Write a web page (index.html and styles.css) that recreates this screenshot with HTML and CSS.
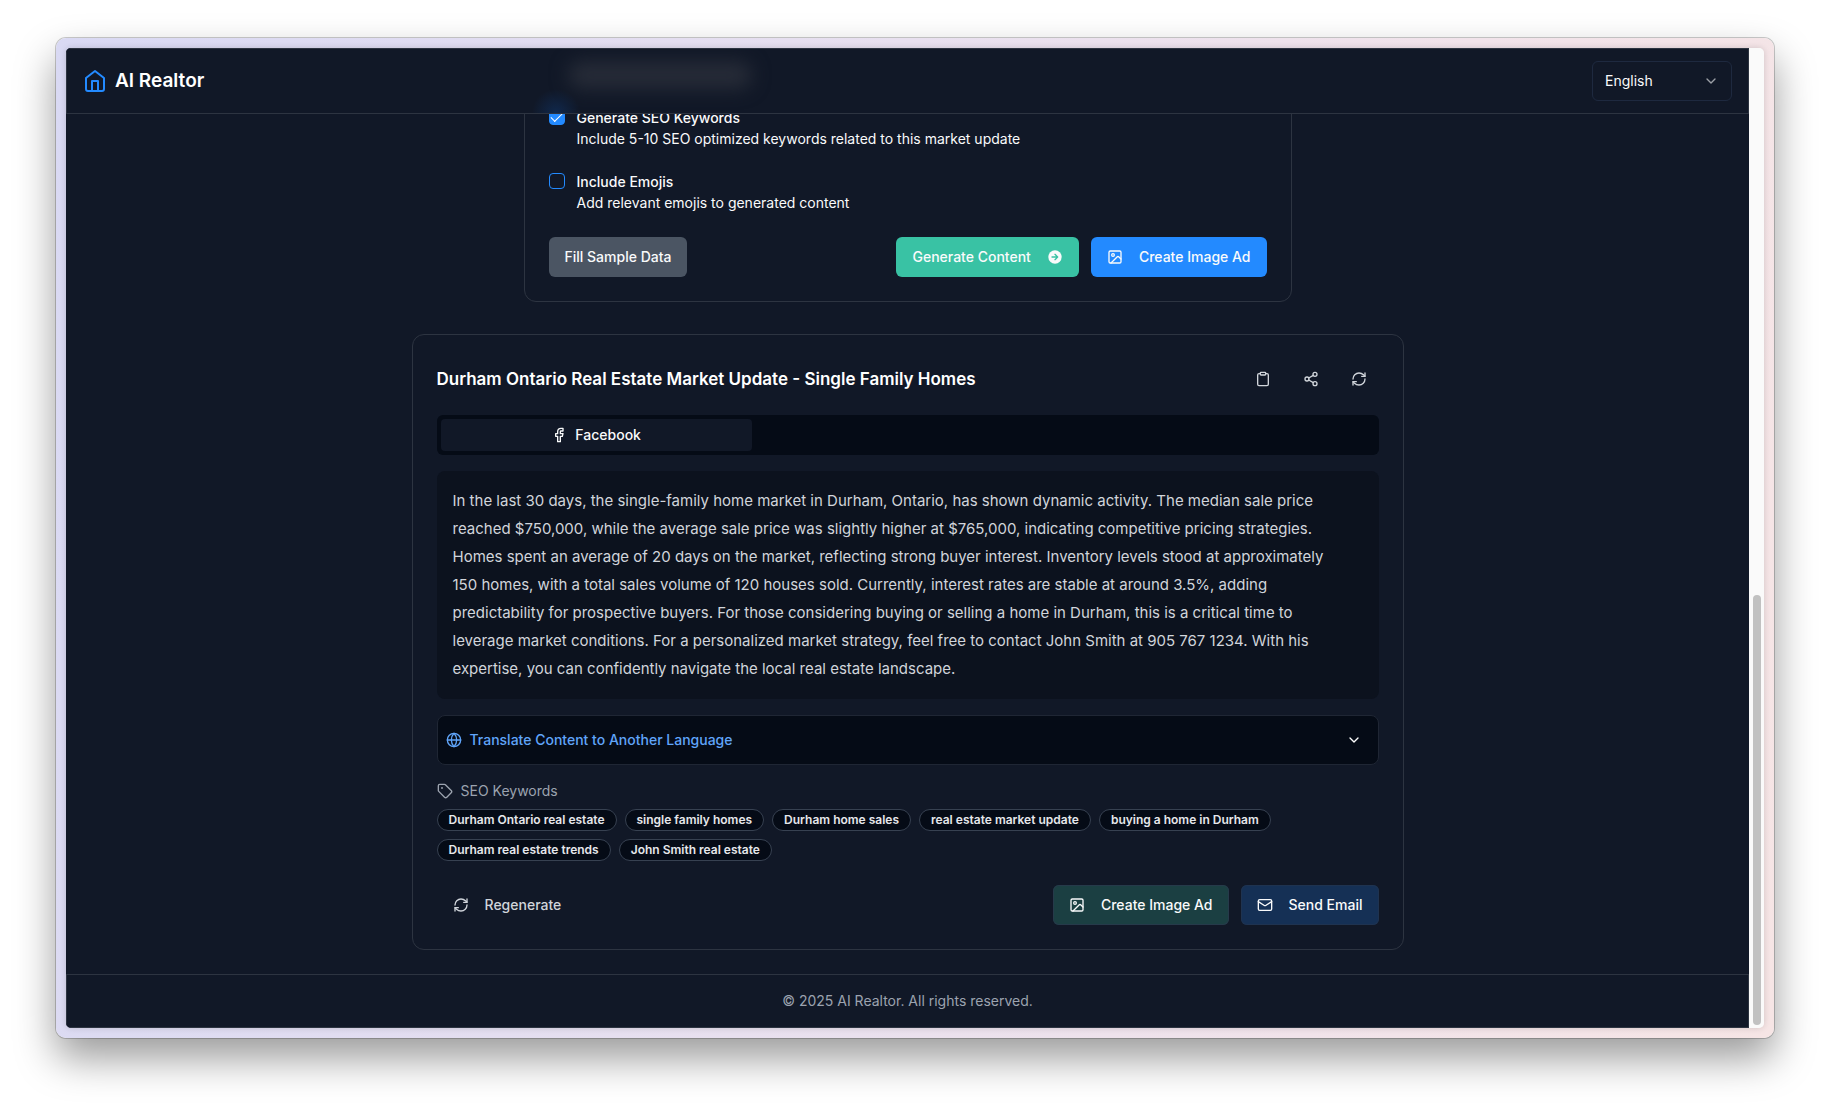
FILE: index.html
```html
<!DOCTYPE html>
<html lang="en">
<head>
<meta charset="utf-8">
<meta name="viewport" content="width=device-width, initial-scale=1">
<title>AI Realtor</title>
<link rel="stylesheet" href="styles.css">
</head>
<body>
<svg class="sprite" aria-hidden="true">
  <symbol id="house" viewBox="0 0 24 24"><path d="m3 9 9-7 9 7v11a2 2 0 0 1-2 2H5a2 2 0 0 1-2-2z"/><path d="M9 22V12h6v10"/></symbol>
  <symbol id="chevron" viewBox="0 0 24 24"><path d="m6 9 6 6 6-6"/></symbol>
  <symbol id="image" viewBox="0 0 24 24"><rect x="3" y="3" width="18" height="18" rx="2"/><circle cx="9" cy="9" r="2"/><path d="m21 15-3.086-3.086a2 2 0 0 0-2.828 0L6 21"/></symbol>
  <symbol id="arrow-circle" viewBox="0 0 24 24"><circle cx="12" cy="12" r="10" fill="currentColor" stroke="none"/><path class="cut" d="M7.500 12h8M12 8l4 4-4 4"/></symbol>
  <symbol id="clipboard" viewBox="0 0 24 24"><rect x="8" y="2" width="8" height="4" rx="1"/><path d="M16 4h2a2 2 0 0 1 2 2v14a2 2 0 0 1-2 2H6a2 2 0 0 1-2-2V6a2 2 0 0 1 2-2h2"/></symbol>
  <symbol id="share" viewBox="0 0 24 24"><circle cx="18" cy="5" r="3"/><circle cx="6" cy="12" r="3"/><circle cx="18" cy="19" r="3"/><path d="m8.590 13.510 6.830 3.980M15.410 6.510l-6.820 3.980"/></symbol>
  <symbol id="refresh" viewBox="0 0 24 24"><path d="M3 12a9 9 0 0 1 9-9 9.750 9.750 0 0 1 6.740 2.740L21 8"/><path d="M21 3v5h-5"/><path d="M21 12a9 9 0 0 1-9 9 9.750 9.750 0 0 1-6.740-2.740L3 16"/><path d="M8 16H3v5"/></symbol>
  <symbol id="facebook" viewBox="0 0 24 24"><path d="M18 2h-3a5 5 0 0 0-5 5v3H7v4h3v8h4v-8h3l1-4h-4V7a1 1 0 0 1 1-1h3z"/></symbol>
  <symbol id="globe" viewBox="0 0 24 24"><circle cx="12" cy="12" r="10"/><path d="M12 2a14.500 14.500 0 0 0 0 20 14.500 14.500 0 0 0 0-20"/><path d="M2 12h20"/></symbol>
  <symbol id="tag" viewBox="0 0 24 24"><path d="M12.586 2.586A2 2 0 0 0 11.172 2H4a2 2 0 0 0-2 2v7.172a2 2 0 0 0 .586 1.414l8.704 8.704a2.426 2.426 0 0 0 3.420 0l6.580-6.580a2.426 2.426 0 0 0 0-3.420z"/><circle cx="7.500" cy="7.500" r=".5" fill="currentColor"/></symbol>
  <symbol id="mail" viewBox="0 0 24 24"><rect x="2" y="4" width="20" height="16" rx="2"/><path d="m22 7-8.970 5.700a1.940 1.940 0 0 1-2.060 0L2 7"/></symbol>
</svg>

<div class="frame">
  <div class="viewport">
    <div class="page">
      <header class="header">
        <a class="brand" href="#"><svg class="icon icon-lg"><use href="#house"/></svg>AI Realtor</a>
        <div class="language">
          <select aria-label="Language"><option>English</option></select>
          <svg class="icon"><use href="#chevron"/></svg>
        </div>
      </header>

      <main class="main">
        <form class="card form-card">
          <div class="option">
            <input type="checkbox" id="seo" checked>
            <div class="option-text">
              <label for="seo">Generate SEO Keywords</label>
              <p>Include 5-10 SEO optimized keywords related to this market update</p>
            </div>
          </div>
          <div class="option">
            <input type="checkbox" id="emojis">
            <div class="option-text">
              <label for="emojis">Include Emojis</label>
              <p>Add relevant emojis to generated content</p>
            </div>
          </div>
          <div class="actions">
            <button type="button" class="btn btn-gray">Fill Sample Data</button>
            <div class="group">
              <button type="button" class="btn btn-green">Generate Content<svg class="icon"><use href="#arrow-circle"/></svg></button>
              <button type="button" class="btn btn-blue"><svg class="icon"><use href="#image"/></svg>Create Image Ad</button>
            </div>
          </div>
        </form>

        <section class="card result-card">
          <div class="result-head">
            <h2>Durham Ontario Real Estate Market Update - Single Family Homes</h2>
            <div class="tools">
              <button type="button" class="btn-icon" aria-label="Copy"><svg class="icon"><use href="#clipboard"/></svg></button>
              <button type="button" class="btn-icon" aria-label="Share"><svg class="icon"><use href="#share"/></svg></button>
              <button type="button" class="btn-icon" aria-label="Refresh"><svg class="icon"><use href="#refresh"/></svg></button>
            </div>
          </div>
          <div class="tabs" role="tablist">
            <button type="button" class="tab" role="tab" aria-selected="true"><svg class="icon"><use href="#facebook"/></svg>Facebook</button>
          </div>
          <p class="post">In the last 30 days, the single-family home market in Durham, Ontario, has shown dynamic activity. The median sale price reached $750,000, while the average sale price was slightly higher at $765,000, indicating competitive pricing strategies. Homes spent an average of 20 days on the market, reflecting strong buyer interest. Inventory levels stood at approximately 150 homes, with a total sales volume of 120 houses sold. Currently, interest rates are stable at around 3.5%, adding predictability for prospective buyers. For those considering buying or selling a home in Durham, this is a critical time to leverage market conditions. For a personalized market strategy, feel free to contact John Smith at 905 767 1234. With his expertise, you can confidently navigate the local real estate landscape.</p>
          <button type="button" class="translate" aria-expanded="false">
            <svg class="icon"><use href="#globe"/></svg><span>Translate Content to Another Language</span><svg class="icon chevron"><use href="#chevron"/></svg>
          </button>
          <div class="keywords">
            <h3><svg class="icon"><use href="#tag"/></svg>SEO Keywords</h3>
            <ul>
              <li>Durham Ontario real estate</li>
              <li>single family homes</li>
              <li>Durham home sales</li>
              <li>real estate market update</li>
              <li>buying a home in Durham</li>
              <li>Durham real estate trends</li>
              <li>John Smith real estate</li>
            </ul>
          </div>
          <div class="actions">
            <button type="button" class="btn btn-ghost"><svg class="icon"><use href="#refresh"/></svg>Regenerate</button>
            <div class="group">
              <button type="button" class="btn btn-teal"><svg class="icon"><use href="#image"/></svg>Create Image Ad</button>
              <button type="button" class="btn btn-navy"><svg class="icon"><use href="#mail"/></svg>Send Email</button>
            </div>
          </div>
        </section>
      </main>

      <footer class="footer">© 2025 AI Realtor. All rights reserved.</footer>
    </div>
    <div class="scrollbar" aria-hidden="true"><div class="thumb"></div></div>
  </div>
</div>
</body>
</html>
```

FILE: styles.css
```css
:root {
  --bg: #111827;
  --deep: #050b16;
  --line: #2d3441;
  --text: #f9fafb;
}

* { box-sizing: border-box; }

body {
  margin: 0;
  padding: 38px 56px 74px;
  background: #fff;
  color: var(--text);
  font: 14px/20px Inter, "Liberation Sans", sans-serif;
}

h2, h3, p, ul { margin: 0; padding: 0; }

button, select { font: inherit; color: inherit; cursor: pointer; }

.sprite { display: none; }

.icon {
  width: 16px;
  height: 16px;
  flex: none;
  fill: none;
  stroke: currentColor;
  stroke-width: 2;
  stroke-linecap: round;
  stroke-linejoin: round;
}

.icon-lg { width: 24px; height: 24px; color: #238aff; }

.cut { stroke: #39c2a4; }

/* window frame */
.frame {
  padding: 10px;
  border-radius: 10px;
  background: linear-gradient(100deg, #d9d9f3 0%, #e8e0ef 45%, #f1e3ea 75%, #f6e5e5 100%);
  box-shadow: 0 0 0 1px rgba(0, 0, 0, .2), 0 20px 40px rgba(0, 0, 0, .4);
}

.viewport {
  display: flex;
  overflow: hidden;
  border-radius: 5px;
  box-shadow: 0 0 6px rgba(0, 0, 0, .15);
}

.page { flex: 1; min-width: 0; background: var(--bg); }

.scrollbar {
  width: 15px;
  display: flex;
  flex-direction: column;
  justify-content: flex-end;
  padding: 0 3px 3px 4px;
  background: #fafafa;
}

.thumb { height: 44%; border-radius: 4px; background: #c1c1c1; }

/* header */
.header {
  position: relative;
  z-index: 1;
  display: flex;
  align-items: center;
  justify-content: space-between;
  height: 66px;
  padding: 0 16px;
  border: 1px solid var(--line);
  background: var(--bg);
}

/* soft glow of the content scrolled under the header */
.header::before {
  content: "";
  position: absolute;
  left: calc(50% - 340px);
  top: 12px;
  width: 184px;
  height: 28px;
  border-radius: 14px;
  background: #262b37;
  filter: blur(9px);
}

.header::after {
  content: "";
  position: absolute;
  left: calc(50% - 376px);
  bottom: 0;
  width: 48px;
  height: 24px;
  background: radial-gradient(24px 24px at 50% 100%, #10284c, transparent);
}

.brand {
  display: flex;
  align-items: center;
  gap: 8px;
  color: #fff;
  font-size: 19px;
  line-height: 28px;
  font-weight: 600;
  text-decoration: none;
}

.language { position: relative; width: 140px; }

.language select {
  display: block;
  width: 100%;
  height: 40px;
  padding: 0 12px;
  appearance: none;
  border: 1px solid #1e293f;
  border-radius: 6px;
  background: transparent;
}

.language .icon {
  position: absolute;
  right: 13px;
  top: 12px;
  opacity: .6;
  pointer-events: none;
}

/* cards */
.main {
  display: flex;
  flex-direction: column;
  align-items: center;
  gap: 32px;
  padding: 0 24px 24px;
}

.card {
  width: 100%;
  padding: 24px;
  border: 1px solid var(--line);
  border-radius: 12px;
}

.form-card { max-width: 768px; margin-top: -30px; }

.result-card { max-width: 992px; }

.option { display: flex; gap: 12px; height: 64px; }

.option input {
  width: 16px;
  height: 16px;
  margin: 0;
  flex: none;
  display: grid;
  place-content: center;
  appearance: none;
  border: 1px solid #238aff;
  border-radius: 4px;
}

.option input:checked { background: #238aff; }

.option input:checked::before {
  content: "";
  width: 10px;
  height: 5px;
  border: solid #fff;
  border-width: 0 0 1px 1px;
  transform: translateY(-1px) rotate(-45deg);
}

.option-text label { display: block; padding-bottom: 2px; font-weight: 500; line-height: 18px; }

.actions { display: flex; justify-content: space-between; }

.group { display: flex; gap: 12px; }

.btn {
  display: flex;
  align-items: center;
  gap: 16px;
  height: 40px;
  padding: 0 16px;
  border: 0;
  border-radius: 6px;
  background: none;
  font-weight: 500;
}

.btn-gray { background: #4b5563; }
.btn-green { background: #39c2a4; }
.btn-blue { background: #238aff; }
.btn-ghost { color: #d1d5db; }
.btn-teal { background: #1b3f42; box-shadow: inset 0 0 0 1px #263a4a; }
.btn-navy { background: #153055; box-shadow: inset 0 0 0 1px #1f3350; }

.result-head {
  display: flex;
  align-items: center;
  justify-content: space-between;
  margin-bottom: 16px;
}

.result-head h2 { color: #fff; font-size: 17px; line-height: 28px; font-weight: 600; }

.tools { display: flex; gap: 8px; }

.btn-icon {
  display: grid;
  place-content: center;
  width: 40px;
  height: 40px;
  padding: 0;
  border: 0;
  background: none;
  color: #d1d5db;
}

.tabs {
  display: grid;
  grid-template-columns: repeat(3, 1fr);
  margin-bottom: 16px;
  padding: 4px;
  border-radius: 6px;
  background: var(--deep);
}

.tab {
  display: flex;
  align-items: center;
  justify-content: center;
  gap: 8px;
  height: 32px;
  border: 0;
  border-radius: 4px;
  background: var(--bg);
  font-weight: 500;
}

.post {
  margin-bottom: 16px;
  padding: 16px 40px 16px 16px;
  border-radius: 8px;
  background: #0c121e;
  color: #d1d5db;
  font-size: 15px;
  line-height: 28px;
}

.translate {
  display: flex;
  align-items: center;
  gap: 8px;
  width: 100%;
  height: 50px;
  margin-bottom: 16px;
  padding: 0 16px 0 8px;
  border: 1px solid #1f2634;
  border-radius: 8px;
  background: var(--deep);
  color: #60a5fa;
  font-weight: 500;
}

.chevron { margin-left: auto; color: #fff; }

.keywords { margin-bottom: 24px; }

.keywords h3 {
  display: flex;
  align-items: center;
  gap: 8px;
  margin-bottom: 8px;
  color: #9ca3af;
  font-size: 14px;
  line-height: 20px;
  font-weight: 400;
}

.keywords ul { display: flex; flex-wrap: wrap; gap: 8px; list-style: none; }

.keywords li {
  padding: 2px 11px;
  border: 1px solid #374151;
  border-radius: 11px;
  background: var(--deep);
  color: #e5e7eb;
  font-size: 12px;
  line-height: 16px;
  font-weight: 600;
}

.footer {
  height: 54px;
  padding: 16px;
  border: 1px solid var(--line);
  color: #9ca3af;
  text-align: center;
}
```
